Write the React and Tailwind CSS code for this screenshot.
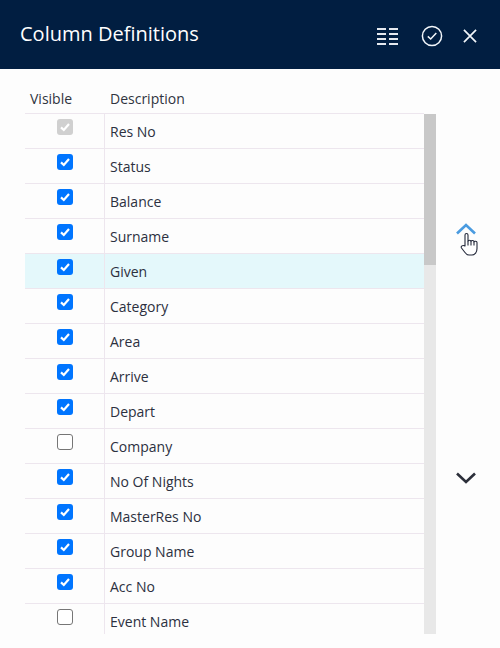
const rows = [
  ["Res No", "disabled"],
  ["Status", "on"],
  ["Balance", "on"],
  ["Surname", "on"],
  ["Given", "on", true],
  ["Category", "on"],
  ["Area", "on"],
  ["Arrive", "on"],
  ["Depart", "on"],
  ["Company", "off"],
  ["No Of Nights", "on"],
  ["MasterRes No", "on"],
  ["Group Name", "on"],
  ["Acc No", "on"],
  ["Event Name", "off"],
];

function Check({ state }) {
  if (state === "off") {
    return <div className="w-4 h-4 rounded-[3px] border border-[#767676] bg-white" />;
  }
  return (
    <div className={`w-4 h-4 rounded-[3px] flex items-center justify-center ${state === "disabled" ? "bg-[#d0d0d0]" : "bg-[#0075ff]"}`}>
      <svg width="12" height="12" viewBox="0 0 12 12" fill="none">
        <path d="M2 6.4 4.800 9 10 3" stroke="white" strokeWidth="2.2" />
      </svg>
    </div>
  );
}

export default function App() {
  return (
    <div className="w-[500px] h-[648px] bg-[#fdfdfd] overflow-hidden font-['Open_Sans',sans-serif]">
      <header className="h-[69px] bg-[#011e41] flex items-center pl-5 pr-[23px]">
        <h1 className="flex-1 text-[20px] leading-7 text-white -mt-[1px]">Column Definitions</h1>
        <svg className="mr-[22px] mt-[2px]" width="22" height="18" viewBox="0 0 22 18" stroke="#e4e8ee" strokeWidth="2">
          <path d="M0 2h9M12 2h9M0 7h9M12 7h9M0 12h9M12 12h9M0 17h9M12 17h9" />
        </svg>
        <svg className="mr-[20px] mt-[3px]" width="22" height="22" viewBox="0 0 22 22" fill="none" stroke="#f2f6fa" strokeWidth="1.5">
          <circle cx="11" cy="11" r="9.6" />
          <path d="M6.8 11.4 9.7 14l5.600-6" />
        </svg>
        <svg className="mt-[3px]" width="14" height="14" viewBox="0 0 15 15" fill="none" stroke="#f2f6fa" strokeWidth="1.8">
          <path d="M1 1l13 13M14 1 1 14" />
        </svg>
      </header>

      <div className="flex pl-[25px] h-[565px]">
        <div className="w-[399px] shrink-0 overflow-hidden">
          <div className="flex h-[44px] items-end text-[14px] text-[#30343f] font-medium">
            <div className="w-[79px] pl-[5px] pb-[4px] leading-5">Visible</div>
            <div className="pl-[6px] pb-[4px] leading-5">Description</div>
          </div>
          {rows.map(([name, state, active]) => (
            <div
              key={name}
              className={`flex h-[35px] border-t border-[#ede6ee] text-[14px] text-[#2c3040] ${active ? "bg-[#e4f8fb]" : ""}`}
            >
              <div className="w-[80px] border-r border-[#ede6ee] flex justify-center pt-[5px] pl-[1px]">
                <Check state={state} />
              </div>
              <div className="pl-[5px] pt-[8px] leading-5">{name}</div>
            </div>
          ))}
        </div>
        <div className="w-[12px] h-[520px] mt-[45px] bg-[#e8e8e8]">
          <div className="h-[151px] bg-[#c8c8c8]" />
        </div>
        <div className="relative flex-1 flex flex-col items-center pr-[5px]">
          <svg className="mt-[154px]" width="20" height="12" viewBox="0 0 20 12" fill="none" stroke="#4a9be0" strokeWidth="2.6">
            <path d="M1 10.500 10 2l9 8.500" />
          </svg>
          <svg className="mt-[237px]" width="20" height="12" viewBox="0 0 20 12" fill="none" stroke="#2c2f3a" strokeWidth="2.6">
            <path d="M1 1.500 10 10l9-8.500" />
          </svg>
          <svg className="absolute left-[24px] top-[163px]" width="18" height="24" viewBox="0 0 18 24" fill="white" stroke="#23283a" strokeWidth="1.1" strokeLinejoin="round">
            <path d="M5 14V3a1.500 1.500 0 0 1 3 0v6.500c0-1.600 3-1.600 3 0 0-1.400 3-1.400 3 .4.200-1 3-1 3 .6v6c0 3.500-2 6.500-5 6.500H9c-2 0-3-1-4-2.500L1.500 16c-1-1.500 1-3.500 3.500-2z" />
            <path d="M8 9.500v4M11 9.500v4M14 10v3.500" fill="none" />
          </svg>
        </div>
      </div>
    </div>
  );
}
